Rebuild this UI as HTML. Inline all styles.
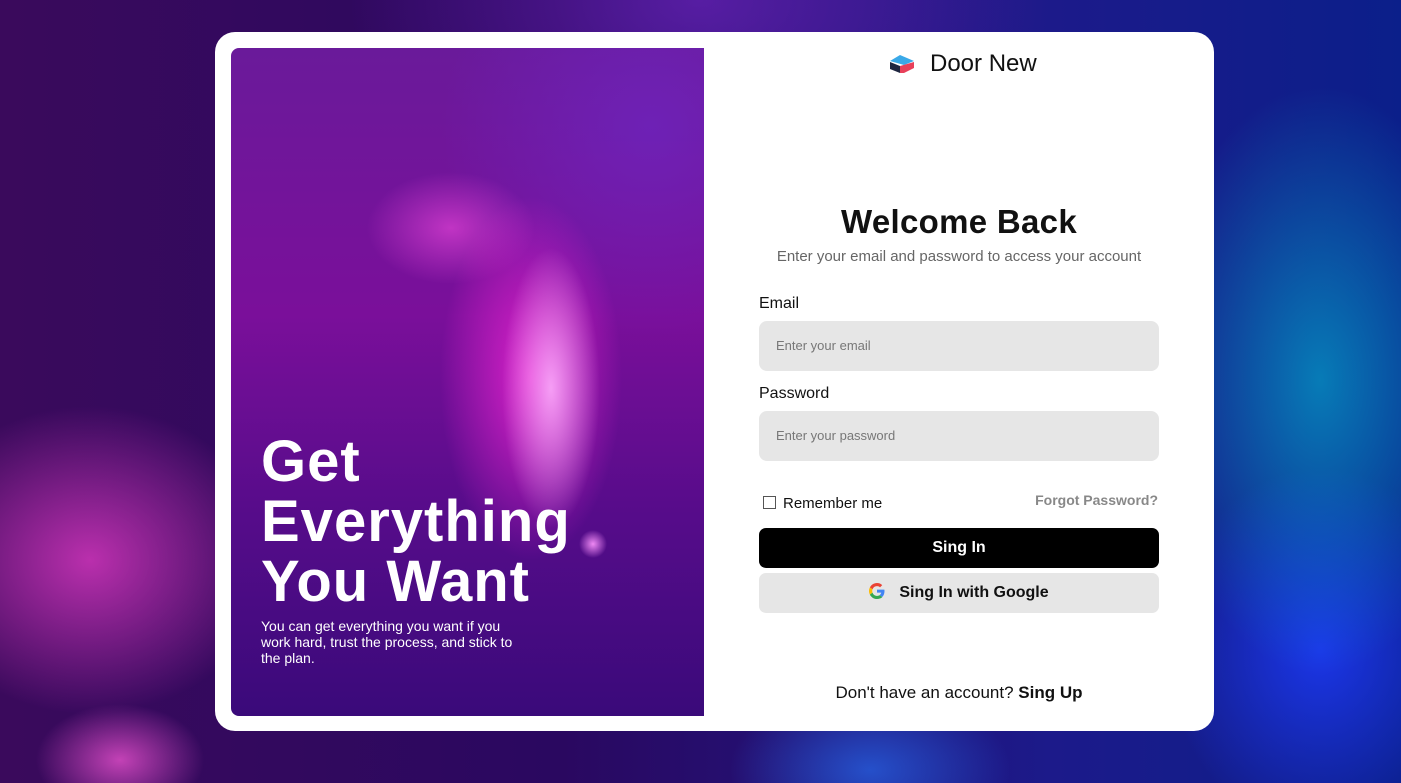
<!DOCTYPE html>
<html><head><meta charset="utf-8"><style>
*{margin:0;padding:0;box-sizing:border-box}
body{width:1401px;height:783px;overflow:hidden;font-family:"Liberation Sans",sans-serif;position:relative;
background:
radial-gradient(ellipse 260px 220px at 90px 560px,rgba(230,60,200,.75),transparent 70%),
radial-gradient(ellipse 120px 80px at 120px 760px,rgba(255,90,220,.7),transparent 70%),
radial-gradient(ellipse 240px 420px at 1320px 380px,rgba(0,200,220,.55),transparent 70%),
radial-gradient(ellipse 220px 260px at 1320px 650px,rgba(30,60,255,.8),transparent 70%),
radial-gradient(ellipse 200px 120px at 870px 770px,rgba(40,120,255,.6),transparent 70%),
radial-gradient(ellipse 500px 300px at 700px 0px,rgba(120,40,200,.6),transparent 70%),
linear-gradient(90deg,#3a0a5c 0%,#2a0860 40%,#1c1a8a 75%,#0b1f8a 100%);}
.card{position:absolute;left:215px;top:32px;width:999px;height:699px;background:#fff;border-radius:20px}
.img{position:absolute;left:16px;top:16px;width:473px;height:668px;border-radius:8px 0 0 8px;overflow:hidden;
background:
radial-gradient(ellipse 70px 200px at 320px 340px,rgba(255,180,255,.85),transparent 70%),
radial-gradient(ellipse 130px 260px at 300px 330px,rgba(255,40,220,.75),transparent 70%),
radial-gradient(ellipse 120px 80px at 220px 180px,rgba(255,80,230,.55),transparent 70%),
radial-gradient(ellipse 20px 20px at 362px 496px,rgba(255,150,255,.9),transparent 70%),
radial-gradient(ellipse 300px 300px at 420px 80px,rgba(110,40,200,.6),transparent 70%),
linear-gradient(180deg,#6a1a9a 0%,#7a0f9a 40%,#560c8a 70%,#3a0a7a 100%)}
.img h1{position:absolute;left:30px;top:384px;color:#fff;font-size:58px;line-height:60px;font-weight:700;letter-spacing:1px}
.img p{position:absolute;left:30px;top:570px;width:272px;color:#fff;font-size:14px;line-height:16px}
.logo{position:absolute;left:673px;top:18px;display:flex;align-items:center;gap:14px;font-size:24px;color:#111}
h2{position:absolute;left:494px;width:500px;text-align:center;top:171px;font-size:33px;font-weight:700;color:#111;letter-spacing:.3px}
.sub{position:absolute;left:494px;width:500px;text-align:center;top:216px;font-size:15px;color:#666}
.lbl{position:absolute;left:544px;font-size:16px;color:#111}
.in{position:absolute;left:544px;width:400px;height:50px;background:#e6e6e6;border-radius:8px;padding-left:17px;line-height:50px;font-size:13px;color:#777}
.btn{position:absolute;left:544px;width:400px;height:40px;border-radius:7px;text-align:center;line-height:40px;font-size:16px;font-weight:700}
</style></head><body>
<div class="card">
<div class="img"><h1>Get<br>Everything<br>You Want</h1><p>You can get everything you want if you work hard, trust the process, and stick to the plan.</p></div>
<div class="logo"><svg width="28" height="22" viewBox="0 0 28 22"><path d="M2 8 L12 2 L26 8 L16 12Z" fill="#3aa9e8"/><path d="M2 9 L12 13 L12 20 L2 16Z" fill="#1f2640"/><path d="M12 13 L26 9 L26 15 L16 20 L12 20Z" fill="#e8405a"/></svg>Door New</div>
<h2>Welcome Back</h2>
<div class="sub">Enter your email and password to access your account</div>
<div class="lbl" style="top:263px">Email</div>
<div class="in" style="top:289px">Enter your email</div>
<div class="lbl" style="top:353px">Password</div>
<div class="in" style="top:379px">Enter your password</div>
<div style="position:absolute;left:548px;top:464px;width:13px;height:13px;border:1px solid #555"></div>
<div style="position:absolute;left:568px;top:463px;font-size:15px;color:#111">Remember me</div>
<div style="position:absolute;right:56px;top:460px;font-size:14px;font-weight:700;color:#888">Forgot Password?</div>
<div class="btn" style="top:496px;background:#000;color:#fff">Sing In</div>
<div class="btn" style="top:541px;background:#e6e6e6;color:#111"><svg width="16" height="16" viewBox="0 0 48 48" style="vertical-align:-2px;margin-right:14px"><path fill="#EA4335" d="M24 9.5c3.5 0 6.6 1.2 9 3.5l6.7-6.7C35.6 2.4 30.2 0 24 0 14.6 0 6.6 5.4 2.7 13.2l7.8 6C12.4 13.7 17.700 9.5 24 9.5z"/><path fill="#4285F4" d="M46.5 24.5c0-1.6-.1-3.1-.4-4.5H24v9h12.7c-.6 3-2.3 5.5-4.8 7.2l7.6 5.9c4.4-4.1 7-10.1 7-17.6z"/><path fill="#FBBC05" d="M10.5 28.8c-.5-1.5-.8-3.1-.8-4.8s.3-3.3.8-4.8l-7.8-6C1 16.5 0 20.1 0 24s1 7.5 2.7 10.8l7.8-6z"/><path fill="#34A853" d="M24 48c6.5 0 11.9-2.1 15.9-5.8l-7.6-5.9c-2.1 1.4-4.9 2.3-8.3 2.3-6.3 0-11.6-4.2-13.5-9.9l-7.8 6C6.6 42.6 14.6 48 24 48z"/></svg>Sing In with Google</div>
<div style="position:absolute;left:494px;width:500px;text-align:center;top:651px;font-size:17px;color:#111">Don't have an account? <b>Sing Up</b></div>
</div>
</body></html>
